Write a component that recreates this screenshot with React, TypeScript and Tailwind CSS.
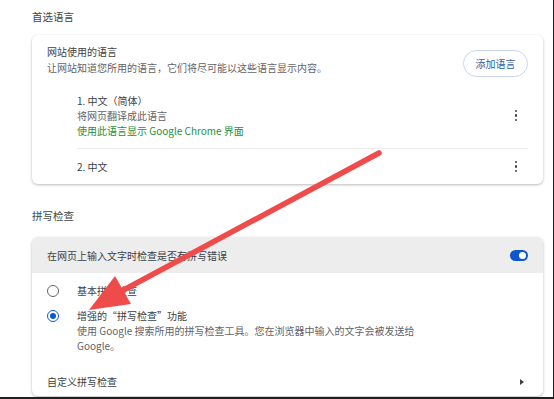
const Radio = ({ checked }: { checked?: boolean }) =>
  checked ? (
    <span className="flex h-[12px] w-[12px] items-center justify-center rounded-full border-[1.5px] border-[#0b57d0]">
      <span className="h-[6px] w-[6px] rounded-full bg-[#0b57d0]" />
    </span>
  ) : (
    <span className="h-[12px] w-[12px] rounded-full border-[1.5px] border-[#5f6368]" />
  )

const Kebab = () => (
  <div className="mr-[11px] flex flex-col items-center gap-[2px]">
    <span className="h-[2.5px] w-[2.5px] rounded-full bg-[#3c4043]" />
    <span className="h-[2.5px] w-[2.5px] rounded-full bg-[#3c4043]" />
    <span className="h-[2.5px] w-[2.5px] rounded-full bg-[#3c4043]" />
  </div>
)

const App = () => {
  return (
    <div
      className="relative h-[399px] w-[554px] overflow-hidden border-r border-b-2 border-[#1f1f1f] bg-white pl-[32px] pr-[10px] text-[10px] leading-[15px] text-[#3c4043]"
      style={{ fontFamily: '"Noto Sans CJK SC", "Noto Sans", sans-serif' }}
    >
      <div className="pt-[9px] text-[10.5px] text-[#444746]">首选语言</div>

      <div className="mt-[11px] rounded-[6px] bg-white px-[15px] shadow-[0_1px_3px_rgba(0,0,0,0.28)]">
        <div className="flex items-start justify-between pt-[9px]">
          <div className="leading-[16px]">
            <div>网站使用的语言</div>
            <div className="text-[#5f6368]">让网站知道您所用的语言，它们将尽可能以这些语言显示内容。</div>
          </div>
          <button className="mt-[6px] h-[27px] w-[65px] rounded-full border border-[#c7d6ee] text-[10px] text-[#2f5ea8]">
            添加语言
          </button>
        </div>

        <div className="mt-[7px] pl-[30px]">
          <div className="flex items-center justify-between pt-[9px] pb-[10px]">
            <div>
              <div>1. 中文（简体）</div>
              <div className="text-[#5f6368]">将网页翻译成此语言</div>
              <div className="text-[#1e8e3e]">使用此语言显示 Google Chrome 界面</div>
            </div>
            <Kebab />
          </div>
          <div className="flex items-center justify-between border-t border-[#ececec] pt-[10px] pb-[10px]">
            <div>2. 中文</div>
            <Kebab />
          </div>
        </div>
      </div>

      <div className="mt-[24px] text-[10.5px] text-[#444746]">拼写检查</div>

      <div className="mt-[14px] overflow-hidden rounded-[6px] bg-white shadow-[0_1px_3px_rgba(0,0,0,0.28)]">
        <div className="flex h-[36px] items-center justify-between bg-[#ededed] px-[15px]">
          <div>在网页上输入文字时检查是否有拼写错误</div>
          <div className="flex h-[11px] w-[18px] items-center justify-end rounded-full bg-[#0b57d0] pr-[2px]">
            <span className="h-[7px] w-[7px] rounded-full bg-white" />
          </div>
        </div>

        <div className="pt-[10px] pl-[15px]">
          <div className="flex items-center">
            <div className="flex w-[30px] justify-start">
              <Radio />
            </div>
            <div>基本拼写检查</div>
          </div>
          <div className="mt-[10px] flex items-start">
            <div className="flex h-[15px] w-[30px] items-center">
              <Radio checked />
            </div>
            <div>
              <div>增强的“拼写检查”功能</div>
              <div className="text-[#5f6368]">
                使用 Google 搜索所用的拼写检查工具。您在浏览器中输入的文字会被发送给
                <br />
                Google。
              </div>
            </div>
          </div>
        </div>

        <div className="flex items-center justify-between pt-[21px] pb-[7px] pl-[15px] pr-[19px]">
          <div>自定义拼写检查</div>
          <span className="h-0 w-0 border-y-[3.5px] border-l-[4px] border-y-transparent border-l-[#3c4043]" />
        </div>
      </div>

      <svg className="pointer-events-none absolute left-0 top-0" width="554" height="399">
        <line x1="379" y1="153" x2="118" y2="293" stroke="#f04b4b" strokeWidth="5.5" strokeLinecap="round" />
        <polygon points="89,310 115,276 131,304" fill="#f04b4b" />
      </svg>
    </div>
  )
}

export default App
